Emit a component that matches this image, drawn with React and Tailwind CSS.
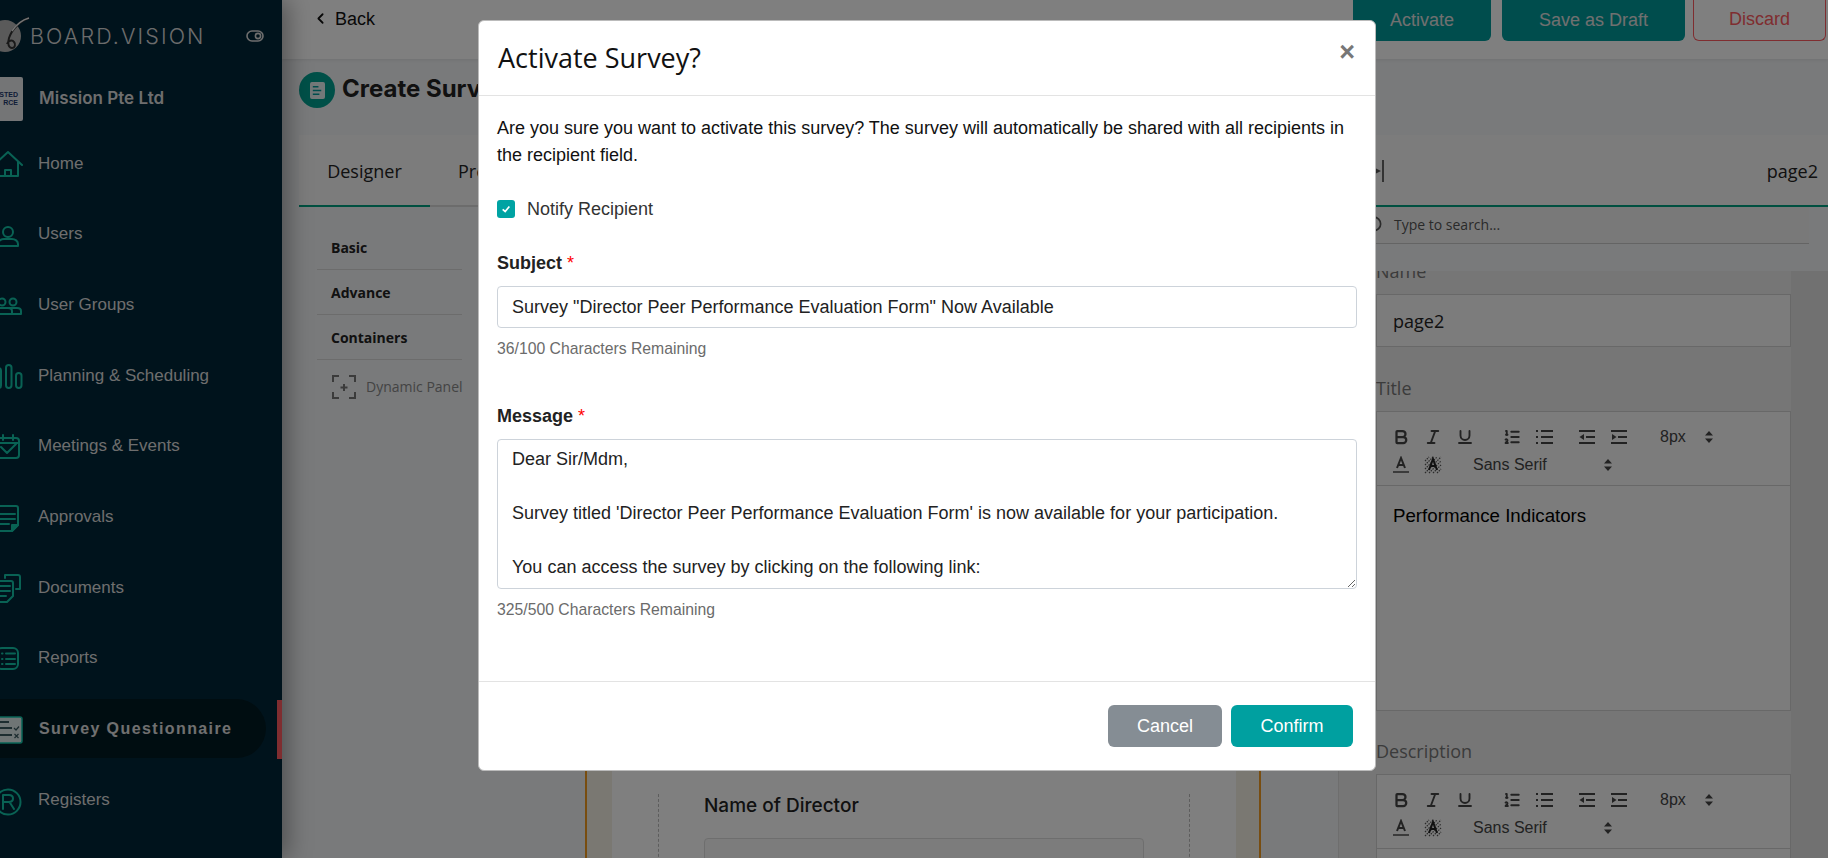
import { Bold, ChevronLeft, Italic, ListOrdered, Underline } from "lucide-react";

const stroke = { fill: "none", stroke: "currentColor", strokeWidth: 2, strokeLinecap: "round", strokeLinejoin: "round" };

const icons = {
  home: (
    <g {...stroke}>
      <path d="M0 16 14 3l14 13" />
      <path d="M4 13v14h20V13" />
      <path d="M11 27v-6h6v6" />
    </g>
  ),
  user: (
    <g {...stroke}>
      <circle cx="14" cy="12" r="5" />
      <path d="M4 26v-2c0-3 3-5 6-5h8c3 0 6 2 6 5v2z" />
    </g>
  ),
  group: (
    <g {...stroke}>
      <circle cx="8" cy="11" r="3.5" />
      <circle cx="19" cy="11" r="3.5" />
      <path d="M2 17h12c2 0 4 1 4 3v3H2z" />
      <path d="M15 17h8c2 0 4 1 4 3v3h-9" />
    </g>
  ),
  planning: (
    <g {...stroke}>
      <rect x="2" y="7" width="5" height="20" rx="2.5" />
      <rect x="12" y="4" width="5.5" height="23" rx="2.7" />
      <rect x="22" y="12" width="5.5" height="15" rx="2.7" />
    </g>
  ),
  meetings: (
    <g {...stroke}>
      <rect x="3" y="6" width="22" height="20" rx="3" />
      <path d="M3 11h22M9 3v5M19 3v5M7 15l6 6 9-9" />
    </g>
  ),
  approvals: (
    <g {...stroke}>
      <path d="M3 3h19c1 0 2 1 2 2v17l-6 6H3z" />
      <path d="M5 11h16M5 16h16M5 21h10" />
      <path d="M18 28v-6h6z" fill="currentColor" />
    </g>
  ),
  documents: (
    <g {...stroke}>
      <path d="M11 5V2h13c1 0 2 1 2 2v12h-4" />
      <path d="M3 8h14c1 0 2 1 2 2v13l-6 6H3z" />
      <path d="M5 13h11M5 18h11M5 23h7" />
    </g>
  ),
  reports: (
    <g {...stroke}>
      <rect x="3" y="4" width="21" height="21" rx="5" />
      <path d="M12 9.5h9M12 15h9M12 20h9M8 9.5h.5M8 15h.5M8 20h.5" />
    </g>
  ),
  survey: (
    <g>
      <rect x="2" y="2" width="26" height="26" rx="2" fill="#dfeaea" stroke="#12c9ae" strokeWidth="1.5" />
      <path d="M5 7h10M5 13h13M5 20h13" stroke="#3b5a60" strokeWidth="2" />
      <path d="M20 13l2 2 3-3.5M20.5 19l4 4m0-4-4 4" stroke="#3b5a60" strokeWidth="1.2" fill="none" />
    </g>
  ),
  registers: (
    <g {...stroke}>
      <circle cx="14" cy="16" r="12.5" />
      <path d="M9 23V9h6c2.5 0 4 1.6 4 3.6S17.5 16 15 16H9m6.5 0 4.5 7" />
    </g>
  ),
};

const navItems = [
  { label: "Home", icon: "home" },
  { label: "Users", icon: "user" },
  { label: "User Groups", icon: "group" },
  { label: "Planning & Scheduling", icon: "planning" },
  { label: "Meetings & Events", icon: "meetings" },
  { label: "Approvals", icon: "approvals" },
  { label: "Documents", icon: "documents" },
  { label: "Reports", icon: "reports" },
  { label: "Survey Questionnaire", icon: "survey", active: true },
  { label: "Registers", icon: "registers" },
];

function NavItem({ item }) {
  return (
    <div className="relative flex h-[70.7px] items-center">
      <div
        className={`flex h-[59px] w-[266px] items-center gap-4 rounded-r-[30px] pl-0 ${
          item.active ? "bg-[#001a22]" : ""
        }`}
      >
        <svg viewBox="0 0 28 28" className="-ml-[6px] h-7 w-7 shrink-0 overflow-visible text-[#12c4a8]">
          {icons[item.icon]}
        </svg>
        <span
          className={
            item.active
              ? "ml-px text-base font-bold tracking-[1.4px] text-[#e0e0e0]"
              : "text-[17px] text-[#dcdcdc]"
          }
        >
          {item.label}
        </span>
      </div>
      {item.active && <div className="absolute right-0 top-[6px] h-[59px] w-[5px] bg-[#ff5a60]" />}
    </div>
  );
}

function Sidebar() {
  return (
    <aside className="relative z-10 flex h-full w-[282px] shrink-0 flex-col overflow-hidden bg-[#002638] shadow-[6px_0_22px_rgba(0,0,0,0.35)]">
      <div className="flex h-[60px] items-center pt-[12px]">
        <svg viewBox="0 0 30 40" className="h-[40px] w-[30px] shrink-0 overflow-visible">
          <circle cx="5" cy="20" r="16" fill="#b4b4b4" />
          <path d="M29 2C20 5 12 13 9 22c-2 6 0 10 3 10s4-4 2-6c-2-3-6-1-7 2" fill="none" stroke="#333" strokeWidth="2" />
          <path d="M29 2C22 4 16 9 12 15" fill="none" stroke="#e8e8e8" strokeWidth="1.4" />
        </svg>
        <span className="whitespace-nowrap font-['Inter',sans-serif] text-[21.5px] font-light tracking-[2.1px] text-[#d8d8d8]">
          BOARD.VISION
        </span>
        <svg viewBox="0 0 18 12" className="ml-[40px] h-[12px] w-[18px] shrink-0">
          <rect x="1" y="1" width="16" height="10" rx="5" fill="none" stroke="#ddd" strokeWidth="1.6" />
          <circle cx="12" cy="6" r="2.6" fill="none" stroke="#ddd" strokeWidth="1.6" />
        </svg>
      </div>
      <div className="mt-[17px] flex h-[44px] items-center">
        <div className="flex h-[44px] w-[23px] shrink-0 flex-col items-end justify-center overflow-hidden rounded-r-[2px] bg-[#e8eaec] pr-[5px] text-[7px] font-bold leading-[8px] text-[#1f3a6e]">
          <span>STED</span>
          <span>RCE</span>
        </div>
        <span className="ml-4 whitespace-nowrap font-['Inter',sans-serif] text-[17px] font-semibold text-[#dcdcdc]">
          Mission Pte Ltd
        </span>
      </div>
      <nav className="mt-[7px]">
        {navItems.map((item) => (
          <NavItem key={item.label} item={item} />
        ))}
      </nav>
    </aside>
  );
}

function UpDown() {
  return (
    <svg viewBox="0 0 8 12" className="h-[12px] w-[8px] fill-[#444]">
      <path d="M4 0 8 4.5H0zM4 12 0 7.5h8z" />
    </svg>
  );
}

function ToolIcon({ children }) {
  return (
    <svg viewBox="0 0 18 18" className="h-[18px] w-[18px]">
      {children}
    </svg>
  );
}

function Editor({ height, text }) {
  const iconCls = "h-[18px] w-[18px] text-[#444]";
  const cell = "flex w-[32px] justify-center";
  const line = { stroke: "#444", strokeWidth: 2, fill: "none" };
  return (
    <div className={`border border-[#d0d0d0] bg-[#f8f8f8] ${height}`}>
      <div className="h-[74px] border-b border-[#d0d0d0] pl-[8px] pt-[15px] font-['Liberation_Sans',sans-serif] text-base text-[#444]">
        <div className="flex h-[20px] items-center">
          <span className={cell}><Bold className={iconCls} strokeWidth={3} /></span>
          <span className={cell}><Italic className={iconCls} strokeWidth={2.5} /></span>
          <span className={cell}><Underline className={iconCls} strokeWidth={2.5} /></span>
          <span className={`${cell} ml-[15px]`}><ListOrdered className={iconCls} strokeWidth={2.5} /></span>
          <span className={cell}>
            <ToolIcon>
              <path d="M6 3h12M6 9h12M6 15h12" {...line} />
              <path d="M1 3h2M1 9h2M1 15h2" {...line} />
            </ToolIcon>
          </span>
          <span className={`${cell} ml-[11px]`}>
            <ToolIcon>
              <path d="M1 3h16M8 9h9M1 15h16" {...line} />
              <path d="M6 6 1.5 9 6 12z" fill="#444" />
            </ToolIcon>
          </span>
          <span className={cell}>
            <ToolIcon>
              <path d="M1 3h16M8 9h9M1 15h16" {...line} />
              <path d="M2 6 6.5 9 2 12z" fill="#444" />
            </ToolIcon>
          </span>
          <span className="ml-[25px] w-[45px]">8px</span>
          <UpDown />
        </div>
        <div className="mt-[8px] flex h-[20px] items-center">
          <span className={cell}>
            <ToolIcon>
              <path d="M5 12 9 2l4 10M6.5 9h5" fill="none" stroke="#444" strokeWidth="2" />
              <path d="M1 16h16" stroke="#777" strokeWidth="2" />
            </ToolIcon>
          </span>
          <span className={cell}>
            <ToolIcon>
              <path
                d="M1 5 5 1M1 9l8-8M1 13 13 1M1 17 17 1M5 17 17 5M9 17l8-8M13 17l4-4"
                stroke="#555"
                strokeWidth="1.2"
                strokeDasharray="1.5 1"
              />
              <path d="M5 14 9 3l4 11M6.5 10h5" fill="none" stroke="#222" strokeWidth="2" />
            </ToolIcon>
          </span>
          <span className="ml-[24px] w-[131px]">Sans Serif</span>
          <UpDown />
        </div>
      </div>
      {text && <div className="pl-[16px] pt-[18px] leading-6 text-black">{text}</div>}
    </div>
  );
}

function Canvas() {
  return (
    <div className="flex min-w-0 flex-1 pl-[105px]">
      <div className="w-[27px] border-l-2 border-[#f09a20] bg-[#f5f0e4]" />
      <div className="w-[624px] bg-white pl-[46px] pr-[46px]">
        <div className="h-full border-x border-dashed border-[#bbb] pl-[45px]">
          <div className="mt-[587px] whitespace-nowrap font-['Inter',sans-serif] text-[19px] font-medium leading-6 text-[#222]">
            Name of Director
          </div>
          <div className="mt-[20px] h-[60px] w-[440px] rounded border border-[#ddd] bg-[#f8f8f8]" />
        </div>
      </div>
      <div className="w-[25px] border-r-2 border-[#f09a20] bg-[#f5f0e4]" />
    </div>
  );
}

function LeftList() {
  const row = "mx-[18px] flex h-[45px] items-center border-b border-[#d8d8d8] pl-[14px] text-[14px] font-bold text-[#222]";
  return (
    <div className="w-[181px] shrink-0 pt-[18px] font-['Open_Sans',sans-serif]">
      <div className={row}>Basic</div>
      <div className={row}>Advance</div>
      <div className={row}>Containers</div>
      <div className="ml-[33px] mt-[15px] flex items-center gap-[10px] text-sm text-[#888]">
        <svg viewBox="0 0 24 24" className="h-6 w-6 shrink-0 fill-none stroke-[#777] stroke-2">
          <path d="M1 7V1h6M17 1h6v6M1 17v6h6M17 23h6v-6M12 9v7M8.5 12.5h7" />
        </svg>
        <span className="whitespace-nowrap">Dynamic Panel</span>
      </div>
    </div>
  );
}

function RightPanel() {
  return (
    <div className="flex w-[490px] shrink-0 flex-col border-l border-[#ddd] font-['Open_Sans',sans-serif]">
      <div className="flex h-[37px] w-[470px] items-center gap-[10px] border-b border-[#c8c8c8] bg-[#f3f3f3] pl-[27px] text-sm text-[#555]">
        <svg viewBox="0 0 16 16" className="h-[18px] w-[18px] fill-none stroke-[#555] stroke-[1.5]">
          <circle cx="7" cy="7" r="6" />
        </svg>
        <span>Type to search...</span>
      </div>
      <div className="mt-[27px] min-h-0 flex-1 overflow-hidden bg-[#ececec] pl-[37px] pr-[37px] [box-shadow:inset_-37px_0_0_#e2e2e2]">
        <div className="-mt-[12px] text-lg leading-6 text-[#777]">Name</div>
        <div className="mt-[11px] flex h-[53px] items-center border border-[#d0d0d0] bg-[#f8f8f8] pl-[16px] text-lg text-[#222]">
          page2
        </div>
        <div className="mt-[29px] text-lg leading-6 text-[#777]">Title</div>
        <div className="mt-[11px]">
          <Editor
            height="h-[300px]"
            text={<span className="font-['Liberation_Sans',sans-serif] text-[18.7px]">Performance Indicators</span>}
          />
        </div>
        <div className="mt-[28px] text-lg leading-6 text-[#777]">Description</div>
        <div className="mt-[11px]">
          <Editor height="h-[200px]" />
        </div>
      </div>
    </div>
  );
}

function Main() {
  return (
    <main className="flex h-full min-w-0 flex-1 flex-col bg-[#f2f4f6]">
      <header className="flex h-[59px] shrink-0 items-start justify-between bg-white pr-[2px] shadow-[0_1px_3px_rgba(0,0,0,0.08)]">
        <div className="ml-[30px] flex h-[37px] items-center gap-[6px] text-lg text-[#111]">
          <ChevronLeft className="h-[17px] w-[17px]" strokeWidth={2.5} />
          <span>Back</span>
        </div>
        <div className="flex text-lg">
          <button className="h-[41px] w-[138px] rounded-b-[6px] bg-[#009a9a] pb-[2px] text-[#e0e0e0]">Activate</button>
          <button className="ml-[11px] h-[41px] w-[183px] rounded-b-[6px] bg-[#009a9a] pb-[2px] text-[#e0e0e0]">Save as Draft</button>
          <button className="ml-[8px] h-[41px] w-[133px] rounded-b-[6px] border border-t-0 border-[#ff5a60] pb-[2px] text-[#ff5a60]">Discard</button>
        </div>
      </header>
      <div className="flex h-[76px] shrink-0 items-start gap-[7px] pl-[17px] pt-[13px]">
        <span className="flex h-9 w-9 items-center justify-center rounded-full bg-[#00a090]">
          <svg viewBox="0 0 16 18" className="h-[17px] w-[15px]">
            <rect width="16" height="18" rx="2" fill="#e6f2f2" />
            <path d="M3 5h6M3 9h9M3 13h7" stroke="#009a9a" strokeWidth="1.6" />
          </svg>
        </span>
        <span className="-mt-px whitespace-nowrap font-['Inter',sans-serif] text-2xl font-bold leading-9 text-[#222]">Create Survey</span>
      </div>
      <div className="ml-[17px] flex min-h-0 flex-1 flex-col">
        <div className="flex h-[72px] shrink-0 bg-[#f8f8f8] font-['Open_Sans',sans-serif] text-lg text-[#222]">
          <div className="flex w-[131px] items-center justify-center border-b-2 border-[#00a080] pt-[2px]">Designer</div>
          <div className="flex flex-1 items-center border-b-2 border-[#d8d8d8] pl-[28px] pt-[2px]">Preview</div>
          <div className="flex w-[490px] items-center justify-between border-b-2 border-[#00a080] pl-[38px] pr-[10px] pt-[2px]">
            <span className="flex items-center gap-[1px]">
              <svg viewBox="0 0 6 6" className="h-[6px] w-[5px] fill-[#555]">
                <path d="M0 0 6 3 0 6z" />
              </svg>
              <span className="h-[22px] w-[2px] bg-[#666]" />
            </span>
            <span>page2</span>
          </div>
        </div>
        <div className="flex min-h-0 flex-1">
          <LeftList />
          <Canvas />
          <RightPanel />
        </div>
      </div>
    </main>
  );
}

function ActivateModal() {
  return (
    <div className="absolute left-[478px] top-[20px] flex h-[751px] w-[898px] flex-col rounded-[6px] border border-[#bbb] bg-white">
      <div className="flex h-[75px] shrink-0 items-center justify-between border-b border-[#e3e3e3] pl-[19px] pr-[20px]">
        <h2 className="font-['Open_Sans',sans-serif] text-[27px] text-[#111]">Activate Survey?</h2>
        <span className="-mt-[11px] font-['Liberation_Sans',sans-serif] text-[27px] font-bold leading-none text-[#777]">×</span>
      </div>
      <div className="min-h-0 flex-1 px-[18px] pt-[19px]">
        <p className="text-lg leading-[27px] text-[#111]">
          Are you sure you want to activate this survey? The survey will automatically be shared with all recipients in the recipient field.
        </p>
        <div className="mt-[31px] flex h-[18px] items-center gap-3 text-lg text-[#333]">
          <span className="flex h-[18px] w-[18px] items-center justify-center rounded-[3px] bg-[#00a3a3]">
            <svg viewBox="0 0 12 12" className="h-[10px] w-[10px] fill-none stroke-white stroke-2">
              <path d="M2 6.5 5 9l5-6" />
            </svg>
          </span>
          <span>Notify Recipient</span>
        </div>
        <label className="mt-[33px] block text-lg font-bold leading-6 text-[#222]">
          Subject <span className="font-normal text-[#f00]">*</span>
        </label>
        <div className="mt-[11px] flex h-[42px] items-center rounded-[4px] border border-[#cdd3da] pl-[14px] text-lg text-[#222]">
          Survey "Director Peer Performance Evaluation Form" Now Available
        </div>
        <div className="mt-[11px] text-[15.75px] leading-5 text-[#6b6b6b]">36/100 Characters Remaining</div>
        <label className="mt-[45px] block text-lg font-bold leading-6 text-[#222]">
          Message <span className="font-normal text-[#f00]">*</span>
        </label>
        <textarea
          readOnly
          className="mt-[11px] block h-[150px] w-full overflow-hidden rounded-[4px] border border-[#cdd3da] px-[14px] py-[6px] text-lg leading-[27px] text-[#222] outline-none"
          defaultValue={"Dear Sir/Mdm,\n\nSurvey titled 'Director Peer Performance Evaluation Form' is now available for your participation.\n\nYou can access the survey by clicking on the following link:\n\nRegards,"}
        />
        <div className="mt-[11px] text-[15.75px] leading-5 text-[#6b6b6b]">325/500 Characters Remaining</div>
      </div>
      <div className="flex h-[89px] shrink-0 items-start justify-end gap-[9px] border-t border-[#e3e3e3] pr-[22px] pt-[23px] text-lg text-white">
        <button className="h-[42px] w-[114px] rounded-[6px] bg-[#858d94]">Cancel</button>
        <button className="h-[42px] w-[122px] rounded-[6px] bg-[#00a0a0]">Confirm</button>
      </div>
    </div>
  );
}

export default function App() {
  return (
    <div className="relative flex h-[858px] w-[1828px] overflow-hidden font-['Liberation_Sans',Arial,sans-serif]">
      <Sidebar />
      <Main />
      <div className="absolute inset-0 z-20 bg-black/50" />
      <div className="absolute inset-0 z-30">
        <ActivateModal />
      </div>
    </div>
  );
}
